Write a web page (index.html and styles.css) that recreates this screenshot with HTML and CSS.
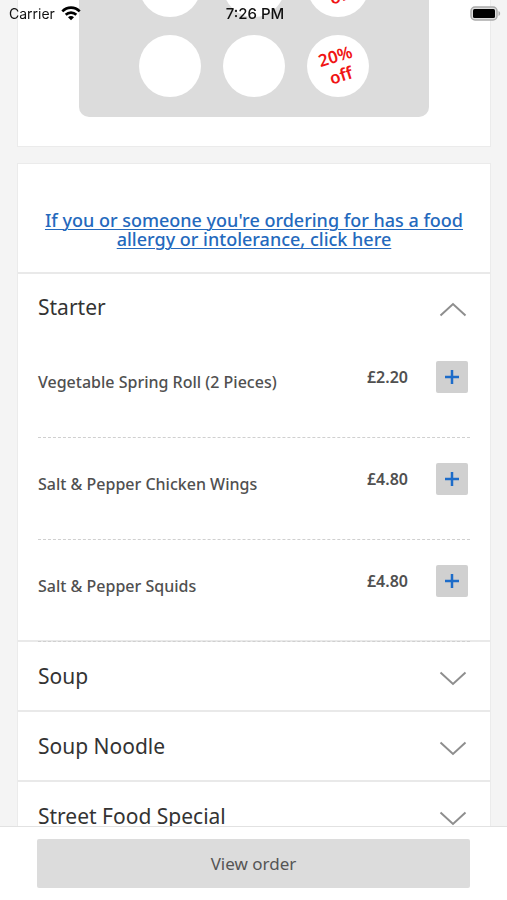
FILE: index.html
```html
<!DOCTYPE html>
<html lang="en">
<head>
<meta charset="utf-8">
<meta name="viewport" content="width=device-width, initial-scale=1">
<title>Menu</title>
<link rel="stylesheet" href="styles.css">
</head>
<body>
<header class="status">
  <span class="carrier">Carrier
    <svg width="20" height="15" viewBox="0 0 20 15" fill="none" stroke="#000" stroke-width="2.6" aria-hidden="true"><path d="M1.3 5.4C6.2.4 13.8.4 18.7 5.4"/><path d="M4.7 8.8c3-2.9 7.600-2.900 10.600 0"/><path d="M10 14.300l-3-3c1.700-1.600 4.300-1.600 6 0z" fill="#000" stroke="none"/></svg>
  </span>
  <time class="clock">7:26 PM</time>
  <svg class="battery" width="31" height="15" viewBox="0 0 31 15" aria-hidden="true"><rect x="1" y="1" width="26" height="13" rx="4" fill="#ddd" stroke="#aaa" stroke-width="1.500"/><rect x="3" y="3" width="22" height="9" rx="1.500" fill="#000"/><path d="M28.500 5v5c2.200-1 2.200-4 0-5z" fill="#aaa"/></svg>
</header>
<main class="page">
  <section class="card loyalty">
    <div class="stamps">
      <span class="stamp"></span><span class="stamp"></span><span class="stamp"><span class="reward">20%<br>off</span></span>
      <span class="stamp"></span><span class="stamp"></span><span class="stamp"><span class="reward">20%<br>off</span></span>
    </div>
  </section>
  <section class="card">
    <p class="allergy"><a href="#allergy">If you or someone you're ordering for has a food allergy or intolerance, click here</a></p>
    <section class="category">
      <button class="toggle open" aria-expanded="true">Starter
        <svg class="chevron" width="28" height="15" viewBox="0 0 28 15" aria-hidden="true"><path d="M1.500 13.500 14 2l12.500 11.500"/></svg></button>
      <ul class="items">
        <li class="item"><span class="name">Vegetable Spring Roll (2 Pieces)</span><span class="price">£2.20</span><button class="add" aria-label="Add Vegetable Spring Roll"><svg width="16" height="16" viewBox="0 0 16 16"><path d="M8 1v14M1 8h14"/></svg></button></li>
        <li class="item"><span class="name">Salt &amp; Pepper Chicken Wings</span><span class="price">£4.80</span><button class="add" aria-label="Add Salt and Pepper Chicken Wings"><svg width="16" height="16" viewBox="0 0 16 16"><path d="M8 1v14M1 8h14"/></svg></button></li>
        <li class="item"><span class="name">Salt &amp; Pepper Squids</span><span class="price">£4.80</span><button class="add" aria-label="Add Salt and Pepper Squids"><svg width="16" height="16" viewBox="0 0 16 16"><path d="M8 1v14M1 8h14"/></svg></button></li>
      </ul>
    </section>
    <section class="category"><button class="toggle" aria-expanded="false">Soup
      <svg class="chevron" width="28" height="15" viewBox="0 0 28 15" aria-hidden="true"><path d="M1.500 1.500 14 13 26.500 1.500"/></svg></button></section>
    <section class="category"><button class="toggle" aria-expanded="false">Soup Noodle
      <svg class="chevron" width="28" height="15" viewBox="0 0 28 15" aria-hidden="true"><path d="M1.500 1.500 14 13 26.500 1.500"/></svg></button></section>
    <section class="category"><button class="toggle" aria-expanded="false">Street Food Special
      <svg class="chevron" width="28" height="15" viewBox="0 0 28 15" aria-hidden="true"><path d="M1.500 1.500 14 13 26.500 1.500"/></svg></button></section>
  </section>
</main>
<footer class="footer"><button class="view">View order</button></footer>
</body>
</html>
```

FILE: styles.css
```css
* { box-sizing: border-box; }
body {
  margin: 0;
  height: 100vh;
  display: flex;
  flex-direction: column;
  overflow: hidden;
  background: #f4f4f4;
  color: #333;
  font-family: "Noto Sans", "Open Sans", sans-serif;
}
button { font: inherit; color: inherit; border: 0; margin: 0; cursor: pointer; }

/* The status bar floats over the scrolled page */
.status {
  position: fixed;
  inset: 0 0 auto 0;
  z-index: 2;
  display: grid;
  grid-template-columns: 1fr auto 1fr;
  align-items: center;
  height: 27px;
  padding: 0 6px 0 9px;
  color: #111;
  font: 14px/20px Inter, sans-serif;
}
.carrier { display: flex; align-items: center; gap: 6px; }
.clock { font-size: 15px; font-weight: 500; }
.battery { justify-self: end; }

.page { flex: 1; min-height: 0; overflow: hidden; padding: 0 16px 0 17px; }
.card { border: 1px solid #ebebeb; background: #fff; margin-bottom: 16px; }

/* The page is scrolled part way down the loyalty card */
.loyalty { margin-top: -96px; padding: 30px 61px 29px; }
.stamps {
  display: grid;
  grid-template-columns: repeat(3, 62px);
  justify-content: center;
  gap: 18px 22px;
  padding: 20px;
  border-radius: 10px;
  background: #dcdcdc;
}
.stamp {
  display: grid;
  place-items: center;
  height: 62px;
  border-radius: 50%;
  background: #fff;
}
.reward {
  transform: rotate(-17deg);
  color: #f01414;
  font-size: 17px;
  line-height: 20px;
  font-weight: 600;
  text-align: center;
}

.allergy { margin: 0; padding: 47px 20px 23px; text-align: center; font-size: 18px; line-height: 19px; font-weight: 500; }
.allergy a { color: #2469bd; text-underline-offset: 2px; text-decoration-thickness: 1px; }

.category { border-top: 2px solid #e9e9e9; }
.toggle {
  display: flex;
  justify-content: space-between;
  align-items: center;
  width: 100%;
  height: 68px;
  padding: 0 23px 0 20px;
  background: #fff;
  font-size: 21px;
  line-height: 28px;
  text-align: left;
}
.toggle.open { height: 62px; padding-top: 4px; }
.chevron { margin-top: 4px; fill: none; stroke: #8e8e8e; stroke-width: 2; }

/* The last dashed rule lies on top of the next category's border */
.items { position: relative; list-style: none; margin: 0 20px -2px; padding: 0; }
.item {
  display: grid;
  grid-template-columns: 1fr auto 32px;
  column-gap: 28px;
  align-items: start;
  padding: 25px 2px 39px 0;
  border-bottom: 1px dashed #d0d0d0;
  color: #505050;
  font-size: 16px;
  line-height: 32px;
}
.name { padding-top: 5px; font-weight: 500; }
.price { font-weight: 600; }
.add { display: grid; place-items: center; height: 32px; padding: 0; border-radius: 2px; background: #d0d0d0; }
.add path { stroke: #1d6cc9; stroke-width: 2.500; }

.footer { padding: 12px 37px; border-top: 1px solid #e2e2e2; background: #fff; }
.view { display: block; width: 100%; height: 49px; border-radius: 2px; background: #dcdcdc; color: #555; font-size: 17px; }
```
